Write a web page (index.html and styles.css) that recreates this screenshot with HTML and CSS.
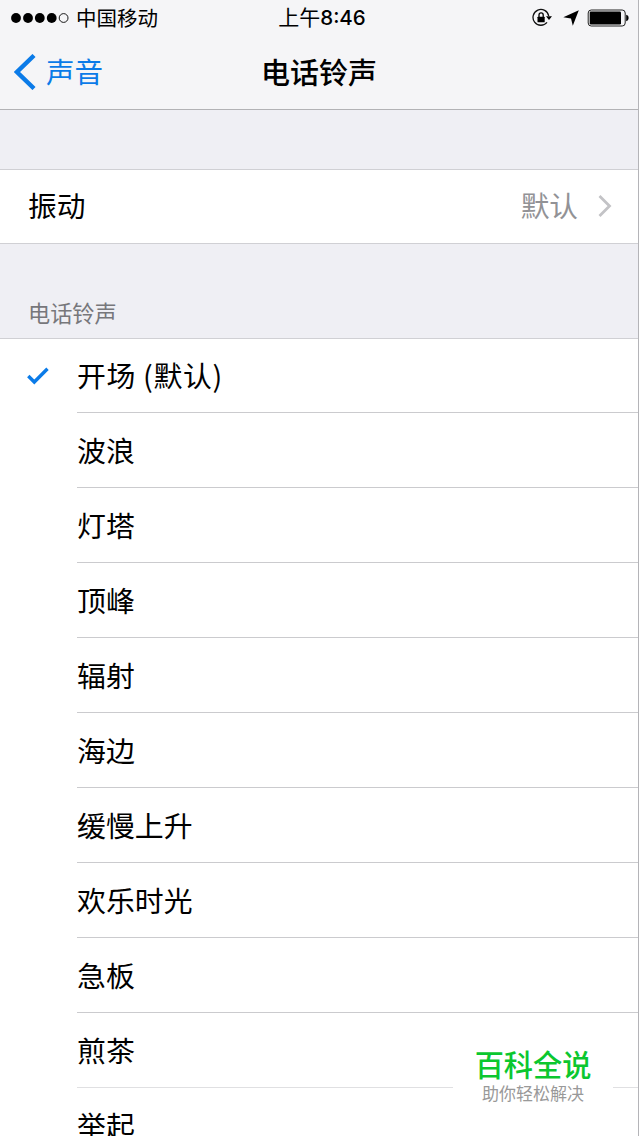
FILE: index.html
```html
<!DOCTYPE html>
<html lang="zh-CN">
<head>
  <meta charset="UTF-8">
  <title>电话铃声</title>
  <link rel="stylesheet" href="styles.css">
</head>
<body>
  <div class="screen">
    <header class="header">
      <div class="status-bar">
        <div class="carrier">
          <svg class="signal" width="59" height="12" viewBox="0 0 59 12">
            <circle cx="5" cy="6" r="4.9"/>
            <circle cx="17" cy="6" r="4.9"/>
            <circle cx="28.8" cy="6" r="4.9"/>
            <circle cx="40.7" cy="6" r="4.9"/>
            <circle cx="52.6" cy="6" r="4.4" fill="none" stroke="#000" stroke-width="0.9"/>
          </svg>
          <span>中国移动</span>
        </div>
        <div class="time">上午<span class="digits">8:46</span></div>
        <div class="status-icons">
          <svg width="20" height="20" viewBox="0 0 20 20">
            <path d="M15 14.4A7.9 7.9 0 1 1 16.7 8" fill="none" stroke="#111" stroke-width="1.3"/>
            <path d="M14 8.3h6l-3 3.7z"/>
            <rect x="5.5" y="8.7" width="7.2" height="5.6" rx="0.6"/>
            <path d="M7 9V7a2.1 2.1 0 0 1 4.2 0v2" fill="none" stroke="#000" stroke-width="1.3"/>
          </svg>
          <svg class="location" width="16" height="16" viewBox="0 0 16 16">
            <path d="M15.8 0.2L9.8 15.8L8 8.6L0.3 7.3z"/>
          </svg>
          <svg class="battery" width="42" height="18" viewBox="0 0 42 18">
            <rect x="1.2" y="1" width="37" height="16" rx="3" fill="none" stroke="#222" stroke-width="1"/>
            <rect x="2.7" y="2.6" width="31.3" height="12.8" rx="1.2"/>
            <path d="M39.2 5.8c3.2 0.4 3.2 6 0 6.4z"/>
          </svg>
        </div>
      </div>
      <nav class="nav-bar">
        <a class="back">
          <svg width="22" height="36" viewBox="0 0 22 36">
            <path d="M20 1.5L3 18L20 34.5" fill="none" stroke="#0b7be8" stroke-width="4.4"/>
          </svg>
          <span>声音</span>
        </a>
        <h1 class="title">电话铃声</h1>
      </nav>
    </header>

    <div class="vibration">
      <span>振动</span>
      <span class="value">默认</span>
      <svg width="14" height="24" viewBox="0 0 14 24">
        <path d="M1.5 2L11.5 12L1.5 22" fill="none" stroke="#c3c3c6" stroke-width="2.8"/>
      </svg>
    </div>

    <h2 class="section-title">电话铃声</h2>

    <ul class="ringtones">
      <li class="selected">
        <svg class="check" width="22" height="18" viewBox="0 0 22 18">
          <path d="M1.3 9L7.3 15L20.5 1.8" fill="none" stroke="#0b7be8" stroke-width="3.4"/>
        </svg>
        <span>开场 (默认)</span>
      </li>
      <li><span>波浪</span></li>
      <li><span>灯塔</span></li>
      <li><span>顶峰</span></li>
      <li><span>辐射</span></li>
      <li><span>海边</span></li>
      <li><span>缓慢上升</span></li>
      <li><span>欢乐时光</span></li>
      <li><span>急板</span></li>
      <li class="light"><span>煎茶</span></li>
      <li><span>举起</span></li>
    </ul>

    <div class="watermark">
      <div class="watermark-name">百科全说</div>
      <div class="watermark-slogan">助你轻松解决</div>
    </div>
  </div>
</body>
</html>
```

FILE: styles.css
```css
* {
  box-sizing: border-box;
}
body {
  margin: 0;
  font-family: "Noto Sans CJK SC", sans-serif;
  color: #000;
  background-color: #efeff4;
}
.screen {
  position: relative;
  width: 639px;
  height: 1136px;
  overflow: hidden;
  border-right: 1px solid #b4b4b8;
}
svg {
  display: block;
  flex-shrink: 0;
}
.header {
  height: 110px;
  background-color: #f5f5f7;
  border-bottom: 1px solid #b2b2b5;
}
.status-bar {
  display: grid;
  grid-template-columns: 1fr auto 1fr;
  align-items: center;
  height: 34px;
  padding: 0 9px 0 11px;
  font-size: 20.5px;
  line-height: 32px;
}
.carrier {
  display: flex;
  align-items: center;
  gap: 6px;
}
.carrier span {
  padding-bottom: 2px;
}
.time {
  font-size: 21px;
  padding: 0 0 2px 4px;
}
.digits {
  font-family: Inter, sans-serif;
  font-weight: 500;
  font-size: 20.5px;
}
.status-icons {
  display: flex;
  align-items: center;
  justify-content: flex-end;
}
.location {
  margin: 0 8px 0 11px;
}
.nav-bar {
  display: grid;
  grid-template-columns: 1fr auto 1fr;
  align-items: center;
  height: 75px;
  padding: 0 14px;
}
.back {
  display: flex;
  align-items: center;
  gap: 10px;
  font-size: 28.5px;
  line-height: 40px;
  color: #0b7be8;
}
.back span {
  padding-bottom: 1px;
}
.title {
  margin: 0;
  padding-bottom: 2px;
  font-size: 29px;
  font-weight: 500;
  line-height: 40px;
}
.vibration {
  display: flex;
  align-items: center;
  height: 75px;
  margin-top: 59px;
  padding: 0 26px 2px 28px;
  font-size: 28.7px;
  background-color: #fff;
  border-top: 1px solid #d0d0d4;
  border-bottom: 1px solid #d0d0d4;
}
.vibration span {
  padding-bottom: 2px;
}
.value {
  margin: 0 20px 0 auto;
  color: #929296;
}
.section-title {
  height: 94px;
  margin: 0;
  padding: 52px 0 0 28px;
  font-size: 22.2px;
  font-weight: 400;
  line-height: 32px;
  color: #77777b;
}
.ringtones {
  margin: 0;
  padding: 0 0 0 77px;
  list-style: none;
  background-color: #fff;
  border-top: 1px solid #d0d0d4;
}
.ringtones li {
  display: flex;
  align-items: center;
  height: 75px;
  font-size: 28.9px;
  border-bottom: 1px solid #cbcbce;
}
.ringtones span {
  padding-bottom: 3px;
}
.ringtones .selected {
  height: 74px;
  letter-spacing: 0.6px;
}
.ringtones .light {
  border-color: #e0e0e2;
}
.check {
  margin: 0 28px 0 -50px;
}
.watermark {
  position: absolute;
  left: 453px;
  top: 1040px;
  width: 160px;
  height: 72px;
  padding-top: 3px;
  text-align: center;
  background-color: #fff;
}
.watermark-name {
  font-size: 29.2px;
  font-weight: 500;
  line-height: 40px;
  color: #0bc72f;
}
.watermark-slogan {
  font-size: 17px;
  line-height: 19px;
  color: #999;
}
```
